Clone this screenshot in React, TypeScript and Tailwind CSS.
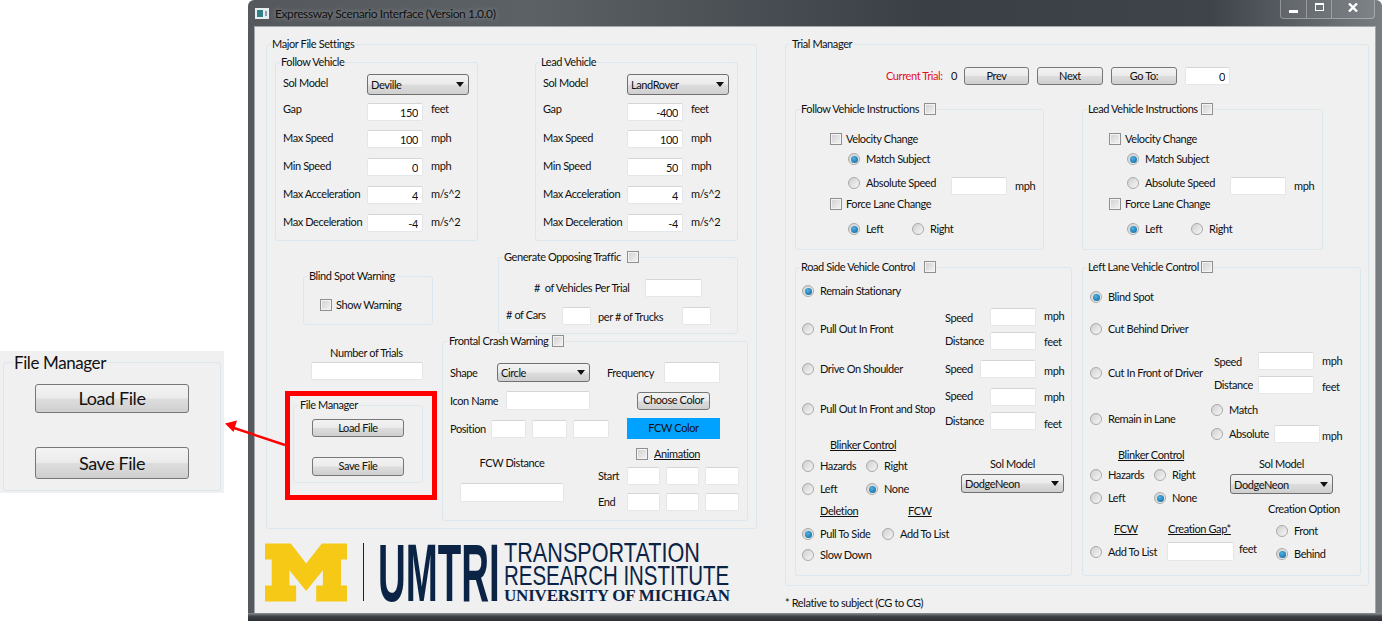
import React from "react";

type P = { className?: string; children?: React.ReactNode };

const T = ({ className = "", children }: P) => (
  <span className={"shrink-0 whitespace-nowrap leading-[14px] " + className}>{children}</span>
);

const Inp = ({ className = "", value = "" }: { className?: string; value?: string }) => (
  <input
    readOnly
    value={value}
    className={"shrink-0 h-[18px] bg-white border border-[#e4e7ea] border-t-[#d3d5d7] rounded-[2px] text-right pr-[4px] outline-none text-[#111] " + className}
  />
);

const Btn = ({ className = "", children }: P) => (
  <div className={"shrink-0 flex items-center justify-center h-[18px] border border-[#777] rounded-[3px] bg-[linear-gradient(180deg,#f3f3f3_0%,#ebebeb_48%,#dddddd_52%,#cfcfcf_100%)] whitespace-nowrap " + className}>
    {children}
  </div>
);

const Combo = ({ className = "", children }: P) => (
  <div className={"shrink-0 flex items-center justify-between pl-[3px] pr-[4px] border border-[#707070] rounded-[3px] bg-[linear-gradient(180deg,#f2f2f2_0%,#ebebeb_48%,#dddddd_52%,#cfcfcf_100%)] " + className}>
    <span className="pt-[2px]">{children}</span>
    <svg width="8" height="5" viewBox="0 0 8 5"><path d="M0 0h8L4 5z" fill="#111" /></svg>
  </div>
);

const Check = ({ className = "" }: { className?: string }) => (
  <div className={"shrink-0 w-[12px] h-[12px] border border-[#8e8f8f] bg-[linear-gradient(135deg,#d0d0d0,#f4f4f4)] shadow-[inset_0_0_0_1px_#f4f4f4] " + className} />
);

const Radio = ({ on = false, className = "", children }: { on?: boolean; className?: string; children?: React.ReactNode }) => (
  <div className={"shrink-0 flex items-center h-[14px] " + className}>
    <div className="shrink-0 flex items-center justify-center w-[12px] h-[12px] rounded-full border border-[#a9a9a9] bg-[linear-gradient(135deg,#cfcfcf,#f7f7f7)]">
      {on && <div className="w-[7px] h-[7px] rounded-full bg-[radial-gradient(circle_at_40%_35%,#4fb2e6,#0b5f94)]" />}
    </div>
    {children && <T className="ml-[6px]">{children}</T>}
  </div>
);

const Group = ({ title, check = false, titleClass = "", className = "", children }: { title: string; check?: boolean; titleClass?: string; className?: string; children?: React.ReactNode }) => (
  <div className={"shrink-0 border border-[#dce6ed] rounded-[3px] " + className}>
    <div className="flex items-center w-fit ml-[4px] -mt-[8px] h-[14px] bg-[#f0f0f0] px-px">
      <span className={"whitespace-nowrap leading-[14px] " + titleClass}>{title}</span>
      {check && <Check />}
    </div>
    {children}
  </div>
);

const Row = ({ className = "", children }: P) => <div className={"flex items-center " + className}>{children}</div>;

const U = ({ className = "", children }: P) => <T className={"underline " + className}>{children}</T>;

function VehicleRows({ model, gap, max, min }: { model: string; gap: string; max: string; min: string }) {
  const rows = [
    { l: "Gap", v: gap, u: "feet", m: "mt-[8px]", s: "mb-[6px]" },
    { l: "Max Speed", v: max, u: "mph", m: "mt-[9px]", s: "mb-[2px]" },
    { l: "Min Speed", v: min, u: "mph", m: "mt-[10px]", s: "mb-[2px]" },
    { l: "Max Acceleration", v: "4", u: "m/s^2", m: "mt-[10px]", s: "mb-[2px]" },
    { l: "Max Deceleration", v: "-4", u: "m/s^2", m: "mt-[10px]", s: "mb-[2px]" },
  ];
  return (
    <>
      <Row className="mt-[5px] h-[21px] ml-[7px]">
        <T className="w-[84px] mb-[3px]">Sol Model</T>
        <Combo className="w-[102px] h-[21px]">{model}</Combo>
      </Row>
      {rows.map((r) => (
        <Row key={r.l} className={"h-[18px] ml-[7px] " + r.m}>
          <T className={"w-[84px] " + r.s}>{r.l}</T>
          <Inp className="w-[56px]" value={r.v} />
          <T className={"ml-[8px] " + r.s}>{r.u}</T>
        </Row>
      ))}
    </>
  );
}

function Instructions({ a, b, className, title, titleClass }: { a: string; b: string; className: string; title: string; titleClass: string }) {
  return (
    <Group title={title} check titleClass={titleClass} className={"h-[141px] " + className}>
      <Row className={"mt-[17px] h-[12px] " + a}>
        <Check />
        <T className="ml-[4px]">Velocity Change</T>
      </Row>
      <Row className={"mt-[7px] h-[14px] " + b}>
        <Radio on>Match Subject</Radio>
      </Row>
      <Row className={"mt-[11px] h-[18px] " + b}>
        <Radio className="w-[103px] mb-[7px]">Absolute Speed</Radio>
        <Inp className="w-[56px]" />
        <T className="ml-[8px]">mph</T>
      </Row>
      <Row className={"mt-[3px] h-[12px] " + a}>
        <Check />
        <T className="ml-[4px]">Force Lane Change</T>
      </Row>
      <Row className={"mt-[12px] h-[14px] " + b}>
        <Radio on className="w-[64px]">Left</Radio>
        <Radio>Right</Radio>
      </Row>
    </Group>
  );
}

function Logo() {
  return (
    <div className="flex items-start mt-[14px] -ml-[1px] h-[59px] text-[#0b2345] tracking-normal">
      <svg width="82" height="59" viewBox="45 70 245 174" className="shrink-0">
        <path
          fill="#f5c915"
          d="M45 70H122L168 130L215 70H290V118H272V196H290V244H198V196H218V150L168 212L118 150V196H138V244H45V196H65V118H45Z"
        />
      </svg>
      <div className="shrink-0 w-px h-[58px] bg-[#0b2345] ml-[16px]" />
      <div className="shrink-0 w-[126px] ml-[14px] h-[59px] font-['Liberation_Sans',sans-serif]">
        <div className="origin-top-left scale-x-[0.475] text-[81px] font-bold leading-[59px] mt-[1px] whitespace-nowrap">UMTRI</div>
      </div>
      <div className="shrink-0 font-['Liberation_Sans',sans-serif]">
        <div className="origin-top-left scale-x-[0.79] text-[27.4px] leading-[20px] h-[20px] whitespace-nowrap">TRANSPORTATION</div>
        <div className="origin-top-left scale-x-[0.747] text-[27.4px] leading-[20px] h-[20px] mt-[3px] whitespace-nowrap">RESEARCH INSTITUTE</div>
        <div className="font-['Liberation_Serif',serif] font-bold text-[17px] leading-[12px] h-[12px] mt-[4px] tracking-[-0.2px] whitespace-nowrap">UNIVERSITY OF MICHIGAN</div>
      </div>
    </div>
  );
}

function MajorSettings() {
  return (
    <Group title="Major File Settings" className="w-[491px] h-[485px]">
      <div className="flex mt-[11px]">
        <Group title="Follow Vehicle" className="ml-[8px] w-[203px] h-[179px]">
          <VehicleRows model="Deville" gap="150" max="100" min="0" />
        </Group>
        <Group title="Lead Vehicle" className="ml-[57px] w-[203px] h-[179px]">
          <VehicleRows model="LandRover" gap="-400" max="100" min="50" />
        </Group>
      </div>
      <div className="flex">
        <div className="shrink-0 ml-[26px] w-[130px]">
          <Group title="Blind Spot Warning" className="mt-[35px] ml-[10px] w-[130px] h-[49px]">
            <Row className="mt-[16px] ml-[16px] h-[12px]">
              <Check />
              <T className="ml-[4px]">Show Warning</T>
            </Row>
          </Group>
          <T className="block mt-[21px] ml-[37px] h-[14px]">Number of Trials</T>
          <Inp className="block mt-[2px] ml-[18px] w-[112px]" />
          <Group title="File Manager" titleClass="pl-px" className="mt-[25px] w-[130px] h-[78px]">
            <Btn className="mt-[7px] ml-[18px] w-[92px]">Load File</Btn>
            <Btn className="mt-[20px] ml-[18px] w-[92px] h-[19px]">Save File</Btn>
          </Group>
        </div>
        <div className="shrink-0 ml-[19px] w-[306px]">
          <Group title="Generate Opposing Traffic" check titleClass="w-[123px]" className="mt-[16px] ml-[56px] w-[240px] h-[77px]">
            <Row className="mt-[15px] h-[18px] ml-[35px]">
              <T className="w-[111px]">#&nbsp; of Vehicles Per Trial</T>
              <Inp className="w-[57px]" />
            </Row>
            <Row className="mt-[10px] h-[18px] ml-[7px]">
              <T className="w-[56px] mb-[2px]"># of Cars</T>
              <Inp className="w-[29px]" />
              <T className="ml-[7px] w-[84px] mt-[2px]">per # of Trucks</T>
              <Inp className="w-[29px]" />
            </Row>
          </Group>
          <Group title="Frontal Crash Warning" check titleClass="w-[104px] pl-px" className="mt-[7px] w-[306px] h-[180px]">
            <Row className="mt-[14px] h-[21px] ml-[7px]">
              <T className="w-[47px]">Shape</T>
              <Combo className="w-[93px] h-[19px]">Circle</Combo>
              <T className="ml-[17px] w-[57px]">Frequency</T>
              <Inp className="w-[56px] h-[21px]" />
            </Row>
            <Row className="mt-[8px] h-[19px] ml-[7px]">
              <T className="w-[56px]">Icon Name</T>
              <Inp className="w-[84px] h-[19px]" />
              <Btn className="ml-[47px] w-[73px]">Choose Color</Btn>
            </Row>
            <Row className="mt-[8px] h-[21px] ml-[7px]">
              <T className="w-[41px]">Position</T>
              <Inp className="w-[35px]" />
              <Inp className="w-[35px] ml-[6px]" />
              <Inp className="w-[36px] ml-[6px]" />
              <div className="ml-[18px] w-[93px] h-[21px] bg-[#00a2ff] flex items-center justify-center">FCW Color</div>
            </Row>
            <div className="flex">
              <div className="shrink-0 w-[155px] pl-[17px] pt-[17px]">
                <T className="block w-[104px] text-center h-[14px]">FCW Distance</T>
                <Inp className="block mt-[13px] w-[104px] h-[19px]" />
              </div>
              <div className="shrink-0">
                <Row className="mt-[9px] h-[12px] ml-[38px]">
                  <Check />
                  <U className="ml-[6px]">Animation</U>
                </Row>
                <Row className="mt-[7px] h-[18px]">
                  <T className="w-[29px]">Start</T>
                  <Inp className="w-[33px]" />
                  <Inp className="w-[33px] ml-[6px]" />
                  <Inp className="w-[34px] ml-[6px]" />
                </Row>
                <Row className="mt-[8px] h-[18px]">
                  <T className="w-[29px]">End</T>
                  <Inp className="w-[33px]" />
                  <Inp className="w-[33px] ml-[6px]" />
                  <Inp className="w-[34px] ml-[6px]" />
                </Row>
              </div>
            </div>
          </Group>
        </div>
      </div>
    </Group>
  );
}

function RoadSide() {
  return (
    <Group title="Road Side Vehicle Control" check titleClass="w-[123px]" className="ml-[9px] w-[277px] h-[309px]">
      <div className="ml-[6px]">
        <Radio on className="mt-[10px]">Remain Stationary</Radio>
        <Row className="mt-[10px]">
          <Radio className="w-[143px]">Pull Out In Front</Radio>
          <div>
            <Row className="h-[18px]">
              <T className="w-[45px] mt-[2px]">Speed</T>
              <Inp className="w-[46px]" />
              <T className="ml-[8px] mb-[2px]">mph</T>
            </Row>
            <Row className="h-[18px] mt-[6px]">
              <T className="w-[45px]">Distance</T>
              <Inp className="w-[46px]" />
              <T className="ml-[8px] mt-[2px]">feet</T>
            </Row>
          </div>
        </Row>
        <Row className="mt-[10px] h-[18px]">
          <Radio className="w-[143px]">Drive On Shoulder</Radio>
          <T className="w-[35px]">Speed</T>
          <Inp className="w-[56px]" />
          <T className="ml-[8px] mt-[3px]">mph</T>
        </Row>
        <Row className="mt-[10px]">
          <Radio className="w-[143px]">Pull Out In Front and Stop</Radio>
          <div>
            <Row className="h-[18px]">
              <T className="w-[45px] mb-[2px]">Speed</T>
              <Inp className="w-[46px]" />
              <T className="ml-[8px]">mph</T>
            </Row>
            <Row className="h-[18px] mt-[6px]">
              <T className="w-[45px]">Distance</T>
              <Inp className="w-[46px]" />
              <T className="ml-[8px] mt-[5px]">feet</T>
            </Row>
          </div>
        </Row>
        <div className="flex">
          <div className="shrink-0 w-[159px]">
            <div className="mt-[7px] h-[14px] ml-[28px]"><U>Blinker Control</U></div>
            <Row className="mt-[8px]">
              <Radio className="w-[64px]">Hazards</Radio>
              <Radio>Right</Radio>
            </Row>
            <Row className="mt-[9px]">
              <Radio className="w-[64px]">Left</Radio>
              <Radio on>None</Radio>
            </Row>
          </div>
          <div className="shrink-0 w-[103px] pt-[27px]">
            <T className="block text-center h-[14px]">Sol Model</T>
            <Combo className="mt-[3px] w-[103px] h-[19px]">DodgeNeon</Combo>
          </div>
        </div>
        <Row className="mt-[8px] h-[14px] ml-[18px]">
          <U className="w-[88px]">Deletion</U>
          <U>FCW</U>
        </Row>
        <Row className="mt-[9px]">
          <Radio on className="w-[80px]">Pull To Side</Radio>
          <Radio>Add To List</Radio>
        </Row>
        <Radio className="mt-[7px]">Slow Down</Radio>
      </div>
    </Group>
  );
}

function LeftLane() {
  return (
    <Group title="Left Lane Vehicle Control" check titleClass="w-[113px]" className="ml-[10px] w-[279px] h-[309px]">
      <div className="ml-[7px]">
        <Radio on className="mt-[16px]">Blind Spot</Radio>
        <Radio className="mt-[18px]">Cut Behind Driver</Radio>
        <Row className="mt-[16px]">
          <Radio className="w-[124px]">Cut In Front of Driver</Radio>
          <div>
            <Row className="h-[18px]">
              <T className="w-[44px] mt-[2px]">Speed</T>
              <Inp className="w-[56px]" />
              <T className="ml-[8px]">mph</T>
            </Row>
            <Row className="h-[18px] mt-[6px]">
              <T className="w-[44px]">Distance</T>
              <Inp className="w-[56px]" />
              <T className="ml-[8px] mt-[3px]">feet</T>
            </Row>
          </div>
        </Row>
        <Row className="mt-[9px]">
          <Radio className="w-[121px] mb-[8px]">Remain in Lane</Radio>
          <div>
            <Radio>Match</Radio>
            <Row className="mt-[8px] h-[18px]">
              <Radio className="w-[63px]">Absolute</Radio>
              <Inp className="w-[46px]" />
              <T className="ml-[2px] mt-[3px]">mph</T>
            </Row>
          </div>
        </Row>
        <div className="flex">
          <div className="shrink-0 w-[140px]">
            <div className="mt-[4px] h-[14px] ml-[28px]"><U>Blinker Control</U></div>
            <Row className="mt-[7px]">
              <Radio className="w-[64px]">Hazards</Radio>
              <Radio>Right</Radio>
            </Row>
            <Row className="mt-[9px]">
              <Radio className="w-[64px]">Left</Radio>
              <Radio on>None</Radio>
            </Row>
          </div>
          <div className="shrink-0 w-[103px] pt-[14px]">
            <T className="block text-center h-[14px]">Sol Model</T>
            <Combo className="mt-[3px] w-[103px] h-[20px]">DodgeNeon</Combo>
          </div>
        </div>
        <div className="flex -mt-[3px]">
          <div className="shrink-0 w-[176px] pt-[20px]">
            <Row className="h-[14px] ml-[24px]">
              <U className="w-[54px]">FCW</U>
              <U>Creation Gap*</U>
            </Row>
            <Row className="mt-[6px] h-[19px]">
              <Radio className="w-[77px]">Add To List</Radio>
              <Inp className="w-[67px] h-[19px]" />
              <T className="ml-[5px] mb-[5px]">feet</T>
            </Row>
          </div>
          <div className="shrink-0">
            <T className="block ml-[2px] h-[14px]">Creation Option</T>
            <Radio className="mt-[8px] ml-[10px]">Front</Radio>
            <Radio on className="mt-[9px] ml-[10px]">Behind</Radio>
          </div>
        </div>
      </div>
    </Group>
  );
}

function TrialManager() {
  return (
    <Group title="Trial Manager" titleClass="pl-px" className="w-[584px] h-[542px]">
      <Row className="mt-[16px] ml-[100px] h-[18px]">
        <T className="w-[65px] text-[#e01020]">Current Trial:</T>
        <T className="w-[13px]">0</T>
        <Btn className="w-[65px]">Prev</Btn>
        <Btn className="w-[66px] ml-[8px]">Next</Btn>
        <Btn className="w-[66px] ml-[8px]">Go To:</Btn>
        <Inp className="w-[45px] ml-[8px]" value="0" />
      </Row>
      <div className="flex mt-[24px]">
        <Instructions title="Follow Vehicle Instructions" titleClass="w-[123px]" className="ml-[9px] w-[249px]" a="ml-[34px]" b="ml-[52px]" />
        <Instructions title="Lead Vehicle Instructions" titleClass="w-[113px]" className="ml-[38px] w-[241px]" a="ml-[26px]" b="ml-[44px]" />
      </div>
      <div className="flex mt-[17px]">
        <RoadSide />
        <LeftLane />
      </div>
    </Group>
  );
}

export default function App() {
  return (
    <div className="relative flex w-[1382px] h-[621px] overflow-hidden bg-white text-[11px] tracking-[-0.4px] text-[#111] font-['Lato','Liberation_Sans',sans-serif]">
      <div className="shrink-0 w-[248px] pt-[351px]">
        <div className="w-[224px] h-[142px] bg-[#f0f0f0] pt-[11px] pl-[3px]">
          <div className="w-[218px] h-[129px] border border-[#dce6ed] rounded-[3px]">
            <div className="w-fit ml-[9px] -mt-[10px] h-[20px] px-px bg-[#f0f0f0] text-[17px] leading-[20px] whitespace-nowrap">File Manager</div>
            <Btn className="mt-[11px] ml-[31px] w-[154px] !h-[29px] text-[18px]">Load File</Btn>
            <Btn className="mt-[34px] ml-[31px] w-[154px] !h-[32px] text-[18px]">Save File</Btn>
          </div>
        </div>
      </div>

      <div className="shrink-0 w-[1134px] h-[621px] flex flex-col rounded-t-[6px] bg-[linear-gradient(90deg,#55595d_0%,#5c6166_25%,#3a3f45_60%,#3f444a_85%,#787d82_100%)]">
        <div className="flex items-start h-[27px] pl-[7px] pr-[7px]">
          <svg width="14" height="11" viewBox="0 0 14 11" className="mt-[8px] shrink-0">
            <rect width="14" height="11" fill="#e8edf0" />
            <rect x="2" y="2" width="6" height="7" fill="#2f7f86" />
            <rect x="10" y="3" width="2" height="5" fill="#8aa0a8" />
          </svg>
          <span className="ml-[6px] mt-[7px] text-[12px] leading-[14px] whitespace-nowrap text-[#101010] [text-shadow:0_0_5px_rgba(255,255,255,0.45)]">
            Expressway Scenario Interface (Version 1.0.0)
          </span>
          <div className="ml-auto flex h-[19px] border border-t-0 border-[#ffffff50] rounded-b-[4px] bg-[#ffffff10]">
            <div className="w-[26px] flex items-end justify-center pb-[5px] border-r border-[#ffffff50]">
              <div className="w-[9px] h-[3px] bg-white" />
            </div>
            <div className="w-[25px] flex items-center justify-center border-r border-[#ffffff50] pb-[4px]">
              <div className="w-[9px] h-[8px] border border-t-2 border-white" />
            </div>
            <div className="w-[42px] flex items-center justify-center pb-[4px]">
              <svg width="10" height="9" viewBox="0 0 10 9">
                <path d="M1 0.5L9 8.5M9 0.5L1 8.5" stroke="#fff" strokeWidth="2.4" />
              </svg>
            </div>
          </div>
        </div>
        <div className="flex ml-[7px] w-[1120px] h-[586px] bg-[#f0f0f0] shadow-[0_0_0_1px_#a4a8ac] pl-[11px] pt-[17px]">
          <div className="shrink-0 w-[491px]">
            <MajorSettings />
            <Logo />
          </div>
          <div className="shrink-0 ml-[28px] w-[584px]">
            <TrialManager />
            <T className="block mt-[10px]">* Relative to subject (CG to CG)</T>
          </div>
        </div>
        <div className="h-[8px] bg-[linear-gradient(180deg,#8d9195_0%,#3f4348_40%,#2b2e32_100%)]" />
      </div>

      <div className="absolute left-[285px] top-[391px] w-[152px] h-[109px] border-[5px] border-[#ff0000]" />
      <svg className="absolute left-[220px] top-[415px]" width="70" height="35" viewBox="0 0 70 35">
        <path d="M65 30L14 13" stroke="#f00" strokeWidth="2.4" />
        <path d="M5 8.5L17 5.5L13.5 17z" fill="#f00" />
      </svg>
    </div>
  );
}
